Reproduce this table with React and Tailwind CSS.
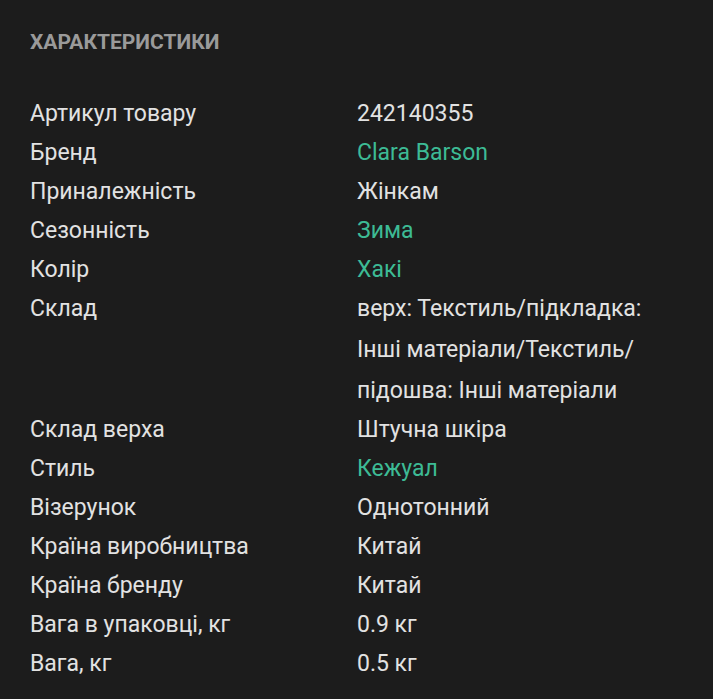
export default function App() {
  const rows = [
    ["Артикул товару", ["242140355"], false],
    ["Бренд", ["Clara Barson"], true],
    ["Приналежність", ["Жінкам"], false],
    ["Сезонність", ["Зима"], true],
    ["Колір", ["Хакі"], true],
    ["Склад", ["верх: Текстиль/підкладка:", "Інші матеріали/Текстиль/", "підошва: Інші матеріали"], false],
    ["Склад верха", ["Штучна шкіра"], false],
    ["Стиль", ["Кежуал"], true],
    ["Візерунок", ["Однотонний"], false],
    ["Країна виробництва", ["Китай"], false],
    ["Країна бренду", ["Китай"], false],
    ["Вага в упаковці, кг", ["0.9 кг"], false],
    ["Вага, кг", ["0.5 кг"], false],
  ];
  return (
    <div className="w-[713px] h-[699px] bg-[#1c1c1c] overflow-hidden pl-[30px] pt-[28px]" style={{ fontFamily: "Roboto, 'Noto Sans', sans-serif" }}>
      <h2 className="text-[21px] font-bold leading-[28px] text-[#9a9a9a] uppercase">Характеристики</h2>
      <div className="mt-[38px] flex flex-col">
        {rows.map(([label, vals, link]) => (
          <div key={label} className="flex">
            <div className="w-[327px] text-[23px] leading-[39px] text-[#e2e2e2]">{label}</div>
            <div className={"flex flex-col -my-px text-[23px] leading-[41px] " + (link ? "text-[#3dbb95]" : "text-[#e2e2e2]")}>
              {vals.map((v) => (
                <div key={v}>{v}</div>
              ))}
            </div>
          </div>
        ))}
      </div>
    </div>
  );
}
